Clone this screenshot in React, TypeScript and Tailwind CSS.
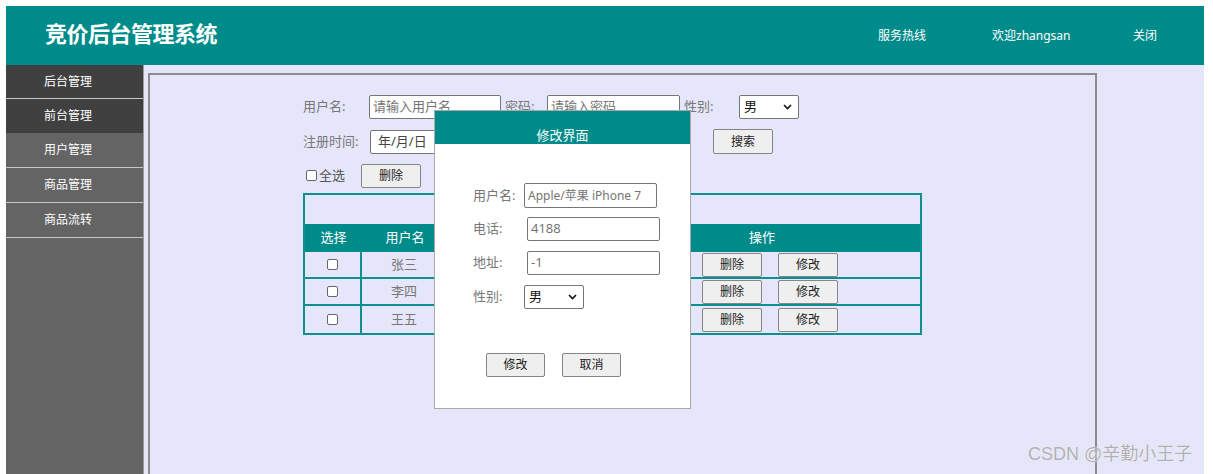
import React from "react";

const MENU = [
  { name: "后台管理", cls: "bg-[#404040] h-[34px] border-b border-[#c8c8c8]" },
  { name: "前台管理", cls: "bg-[#404040] h-[34px]" },
  { name: "用户管理", cls: "bg-[#646464] h-[35px] border-b border-[#c8c8c8]" },
  { name: "商品管理", cls: "bg-[#646464] h-[35px] border-b border-[#c8c8c8]" },
  { name: "商品流转", cls: "bg-[#646464] h-[35px] border-b border-[#c8c8c8]" },
];

const USERS = ["张三", "李四", "王五"];

function Chevron() {
  return (
    <svg width="9" height="6" viewBox="0 0 9 6" className="shrink-0">
      <polyline points="1,1 4.5,4.5 8,1" fill="none" stroke="#111" strokeWidth="1.6" />
    </svg>
  );
}

function Box({ w, h = 24, children, muted = true, size = "text-[13px]" }: { w: string; h?: number; children?: React.ReactNode; muted?: boolean; size?: string }) {
  return (
    <div
      className={`${w} ${size} bg-white border border-[#767676] rounded-[2px] flex items-center px-[3px] whitespace-nowrap overflow-hidden ${muted ? "text-[#757575]" : "text-[#111]"}`}
      style={{ height: h }}
    >
      {children}
    </div>
  );
}

function Select({ w }: { w: string }) {
  return (
    <div className={`${w} h-[24px] bg-white border border-[#767676] rounded-[2px] flex items-center justify-between pl-[4px] pr-[6px] text-[13px] text-[#111]`}>
      <span>男</span>
      <Chevron />
    </div>
  );
}

function Btn({ w = "w-[60px]", h = "h-[25px]", children }: { w?: string; h?: string; children: React.ReactNode }) {
  return (
    <div className={`${w} ${h} bg-[#efefef] border border-[#858585] rounded-[2px] flex items-center justify-center text-[12px] text-[#222]`}>
      {children}
    </div>
  );
}

function Check() {
  return <span className="inline-block w-[11px] h-[11px] border border-[#666] rounded-[2px] bg-white" />;
}

export default function App() {
  return (
    <div className="relative w-[1213px] h-[474px] overflow-hidden bg-white pt-[6px] pl-[6px] font-['Noto_Sans','Noto_Sans_CJK_SC',sans-serif]">
      <div className="w-[1198px]">
        {/* 顶部 */}
        <div className="h-[59px] bg-[#008b8b] flex items-center text-white">
          <h1 className="ml-[39px] -mt-[6px] text-[22px] font-bold leading-none tracking-[-0.5px]">竞价后台管理系统</h1>
          <div className="ml-auto flex text-[12px] pt-[1px]">
            <span className="w-[114px]">服务热线</span>
            <span className="w-[141px]">欢迎zhangsan</span>
            <span className="w-[71px]">关闭</span>
          </div>
        </div>

        <div className="flex h-[409px]">
          {/* 侧边栏 */}
          <div className="w-[138px] bg-[#646464] border-r border-[#9a9a9a] flex flex-col">
            {MENU.map((m) => (
              <div key={m.name} className={`${m.cls} flex items-center pl-[38px] text-[12px] text-white`}>
                {m.name}
              </div>
            ))}
          </div>

          {/* 主体 */}
          <div className="flex-1 bg-[#e6e6fa]">
            <div className="mt-[8px] ml-[4px] w-[949px] h-[420px] border-2 border-[#8c8c8c] pl-[153px] pt-[20px] text-[13px] text-[#777]">
              <div className="flex items-center h-[24px]">
                <span className="w-[66px]">用户名:</span>
                <Box w="w-[132px]">请输入用户名</Box>
                <span className="ml-[4px] w-[42px]">密码:</span>
                <Box w="w-[133px]">请输入密码</Box>
                <span className="ml-[4px] w-[55px]">性别:</span>
                <Select w="w-[60px]" />
              </div>

              <div className="flex items-center h-[25px] mt-[10px]">
                <span className="w-[67px]">注册时间:</span>
                <Box w="w-[132px]" muted={false}>
                  <span className="pl-[4px] text-[#444]">年/月/日</span>
                </Box>
                <div className="ml-[211px]">
                  <Btn>搜索</Btn>
                </div>
              </div>

              <div className="flex items-center h-[25px] mt-[9px]">
                <span className="ml-[3px] flex items-center gap-[2px] text-[13px] text-[#555]">
                  <Check />
                  全选
                </span>
                <div className="ml-[16px]">
                  <Btn h="h-[24px]">删除</Btn>
                </div>
              </div>

              {/* 表格 */}
              <div className="mt-[5px] w-[619px] border-2 border-[#0e9090] bg-[#e6e6fa]">
                <div className="h-[29px]" />
                <div className="h-[28px] bg-[#008b8b] flex items-center text-white text-[13px]">
                  <span className="w-[57px] text-center">选择</span>
                  <span className="w-[86px] text-center">用户名</span>
                  <span className="w-[156px]" />
                  <span className="flex-1 text-center">操作</span>
                </div>
                {USERS.map((u, i) => (
                  <div
                    key={u}
                    className={`h-[27px] flex items-center ${i < USERS.length - 1 ? "border-b-2 border-[#0e9090]" : ""}`}
                  >
                    <span className="w-[57px] h-full flex items-center justify-center border-r-2 border-[#0e9090]">
                      <Check />
                    </span>
                    <span className="w-[86px] h-full flex items-center justify-center border-r-2 border-[#0e9090] text-[#777]">
                      {u}
                    </span>
                    <span className="w-[156px] h-full" />
                    <span className="flex-1 flex items-center gap-[16px] pl-[98px]">
                      <Btn h="h-[24px]">删除</Btn>
                      <Btn h="h-[24px]">修改</Btn>
                    </span>
                  </div>
                ))}
              </div>
            </div>
          </div>
        </div>
      </div>

      {/* 修改弹窗 */}
      <div className="absolute left-[434px] top-[110px] w-[257px] h-[299px] bg-white border border-[#a9a9a9]">
        <div className="h-[33px] bg-[#008b8b] text-white text-[13px] text-center pt-[16px] leading-[16px]">修改界面</div>
        <div className="pl-[38px] pt-[39px] text-[13px] text-[#777]">
          <div className="flex items-center h-[25px]">
            <span className="w-[51px]">用户名:</span>
            <Box w="w-[133px]" h={25} size="text-[12px]">Apple/苹果 iPhone 7</Box>
          </div>
          <div className="flex items-center h-[24px] mt-[9px]">
            <span className="w-[54px]">电话:</span>
            <Box w="w-[133px]">4188</Box>
          </div>
          <div className="flex items-center h-[24px] mt-[10px]">
            <span className="w-[54px]">地址:</span>
            <Box w="w-[133px]">-1</Box>
          </div>
          <div className="flex items-center h-[24px] mt-[10px]">
            <span className="w-[51px]">性别:</span>
            <Select w="w-[60px]" />
          </div>
          <div className="flex items-center gap-[17px] mt-[44px] pl-[13px]">
            <Btn w="w-[59px]" h="h-[24px]">修改</Btn>
            <Btn w="w-[59px]" h="h-[24px]">取消</Btn>
          </div>
        </div>
      </div>

      {/* 水印 */}
      <div className="absolute left-[1028px] top-[443px] text-[18px] leading-[22px] text-[#b0b0b0] font-['Liberation_Sans','Noto_Sans_CJK_SC',sans-serif] [text-shadow:0_0_1px_#ffffff]">
        CSDN @辛勤小王子
      </div>
    </div>
  );
}
